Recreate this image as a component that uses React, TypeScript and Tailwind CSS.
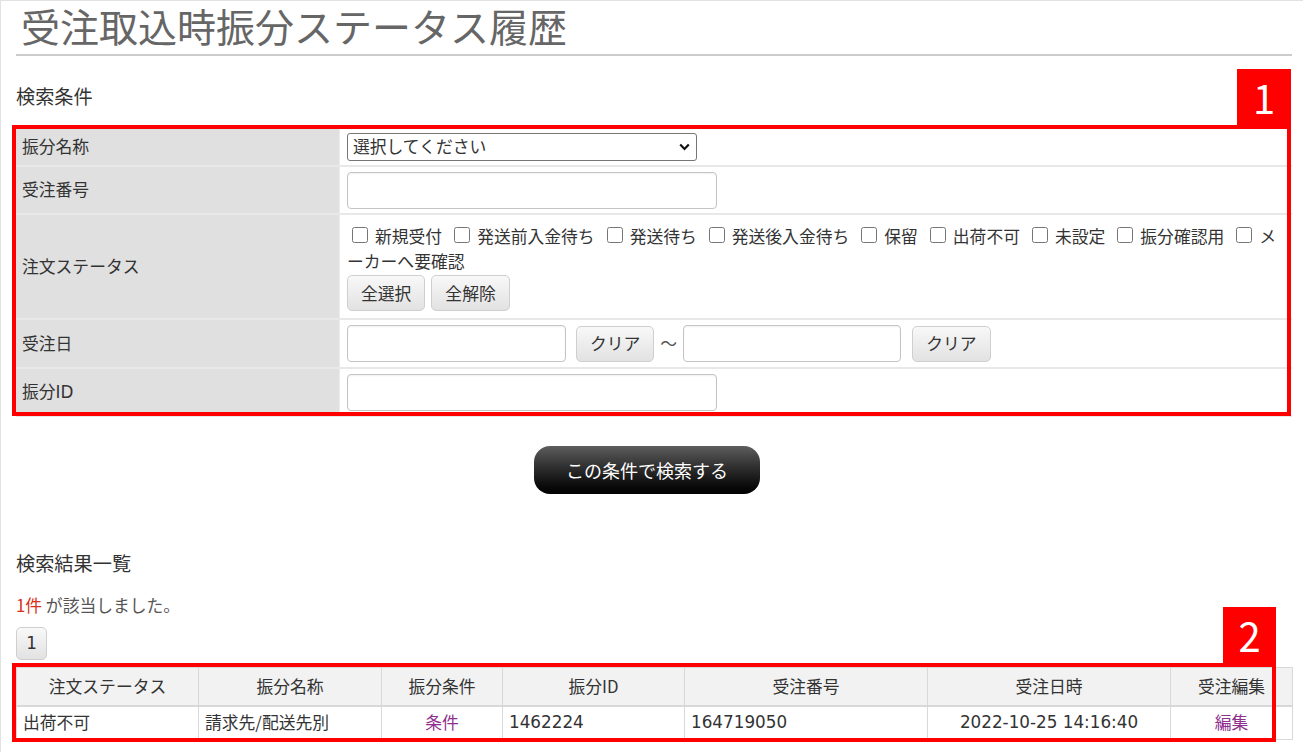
import type { ReactNode } from 'react';

const statuses = ['新規受付', '発送前入金待ち', '発送待ち', '発送後入金待ち', '保留', '出荷不可', '未設定', '振分確認用', 'メ'];

const columns = [
  { label: '注文ステータス', w: 'w-[182px]' },
  { label: '振分名称', w: 'w-[183px]' },
  { label: '振分条件', w: 'w-[121px]' },
  { label: '振分ID', w: 'w-[182px]' },
  { label: '受注番号', w: 'w-[243px]' },
  { label: '受注日時', w: 'w-[243px]' },
  { label: '受注編集', w: 'w-[122px]' },
];

// latin runs in the reference use a wide Verdana-like face
const latin = "font-['DejaVu_Sans','Noto_Sans_CJK_JP',sans-serif]";

function GrayButton({ children, className = '' }: { children: ReactNode; className?: string }) {
  return (
    <button
      type="button"
      className={`rounded-[5px] border border-[#cfcfcf] bg-linear-to-b from-[#f8f8f8] to-[#e2e2e2] text-[#333] leading-none ${className}`}
    >
      {children}
    </button>
  );
}

function Checkbox() {
  return <span className="inline-block h-[16px] w-[16px] shrink-0 rounded-[2.5px] border border-[#767676] bg-white" />;
}

function TextBox({ w }: { w: string }) {
  return <div className={`h-[37px] ${w} shrink-0 rounded-[4px] border border-[#c4c4c4] bg-white shadow-[inset_0_1px_2px_rgba(0,0,0,0.06)]`} />;
}

function Row({ label, h, children, top = false }: { label: ReactNode; h: string; children: ReactNode; top?: boolean }) {
  return (
    <div className={`flex ${h} border-b-2 border-[#e8e8e8]`}>
      <div className="flex w-[324px] shrink-0 items-center border-r border-[#ececec] bg-[#e0e0e0] pl-[6px] text-[#333]">
        {label}
      </div>
      <div className={`flex flex-1 pl-[7px] ${top ? 'flex-col pt-[9px]' : 'items-center'}`}>{children}</div>
    </div>
  );
}

export default function App() {
  return (
    <div className="h-[752px] w-[1303px] overflow-hidden border-l border-t border-[#e2e2e2] bg-white pl-[15px] pr-[11px] font-['Noto_Sans_CJK_JP','Noto_Sans',sans-serif] text-[16.8px] text-[#333]">
      {/* Title */}
      <div className="h-[55px] border-b-2 border-[#cccccc]">
        <h1 className="pl-[5px] text-[39px] leading-[48px] text-[#666]">受注取込時振分ステータス履歴</h1>
      </div>

      <h2 className="mt-[28px] text-[19.2px] leading-[24px]">検索条件</h2>

      {/* Search conditions */}
      <div className="relative mt-[21px]">
        <div className="pointer-events-none absolute -left-[4px] -top-[4px] bottom-[1px] right-[1px] z-10 border-4 border-[#ff0000]" />
        <div className="absolute -top-[60px] right-[1px] z-10 flex h-[56px] w-[54px] items-center justify-center bg-[#ff0000] text-[40px] leading-none text-white">
          1
        </div>

        <Row label="振分名称" h="h-[38px]">
          <div className="flex h-[28px] w-[350px] items-center justify-between rounded-[3px] border border-[#767676] bg-white pl-[5px] pr-[6px]">
            <span>選択してください</span>
            <svg width="11" height="8" viewBox="0 0 11 8" fill="none">
              <path d="M1.2 1.5 L5.5 6 L9.8 1.5" stroke="#111" strokeWidth="2.2" />
            </svg>
          </div>
        </Row>

        <Row label="受注番号" h="h-[48px]">
          <TextBox w="w-[370px]" />
        </Row>

        <Row label="注文ステータス" h="h-[105px]" top>
          <div className="flex h-[25px] items-center whitespace-nowrap">
            {statuses.map((s, i) => (
              <span key={s} className={`flex items-center ${i > 0 ? 'ml-[7px]' : ''}`}>
                <span className="ml-[5px]">
                  <Checkbox />
                </span>
                <span className="ml-[7px] leading-[25px]">{s}</span>
              </span>
            ))}
          </div>
          <div className="leading-[25px]">ーカーへ要確認</div>
          <div className="mt-[1px] flex gap-[6px]">
            <GrayButton className="h-[36px] px-[13px]">全選択</GrayButton>
            <GrayButton className="h-[36px] px-[13px]">全解除</GrayButton>
          </div>
        </Row>

        <Row label="受注日" h="h-[49px]">
          <TextBox w="w-[219px]" />
          <GrayButton className="ml-[10px] h-[36px] px-[13px]">クリア</GrayButton>
          <span className="ml-[6px] text-[#555]">～</span>
          <span className="ml-[6px]">
            <TextBox w="w-[218px]" />
          </span>
          <GrayButton className="ml-[11px] h-[36px] px-[13px]">クリア</GrayButton>
        </Row>

        <Row
          label={
            <span>
              振分<span className={latin}>ID</span>
            </span>
          }
          h="h-[48px]"
        >
          <TextBox w="w-[370px]" />
        </Row>
      </div>

      {/* Search button */}
      <div className="mt-[29px] flex justify-center pr-[14px]">
        <button
          type="button"
          className="h-[48px] w-[226px] rounded-[16px] bg-linear-to-b from-[#5e5e5e] to-[#020202] text-[18px] text-white"
        >
          この条件で検索する
        </button>
      </div>

      <h2 className="mt-[57px] text-[19.2px] leading-[24px]">検索結果一覧</h2>

      <p className="mt-[18px] leading-[24px] text-[#555]">
        <span className="text-[#d8301c]">1件</span> が該当しました。
      </p>

      <div className="mt-[10px]">
        <GrayButton className={`h-[33px] w-[31px] rounded-[4px] border-[#c2c2c2] from-[#e9e9e9] to-[#cdcdcd] ${latin}`}>1</GrayButton>
      </div>

      {/* Results */}
      <div className="relative mt-[7px]">
        <div className="pointer-events-none absolute -bottom-[2px] -left-[4px] -top-[4px] right-[16px] z-10 border-4 border-[#ff0000]" />
        <div className="absolute -top-[60px] right-[16px] z-10 flex h-[56px] w-[53px] items-center justify-center bg-[#ff0000] text-[40px] leading-none text-white">
          2
        </div>

        <table className="w-[1276px] table-fixed border-collapse">
          <thead>
            <tr className="h-[38px] bg-[#f1f2f1]">
              {columns.map((c) => (
                <th key={c.label} className={`${c.w} border border-b-2 border-[#d8d8d8] font-normal text-[#333]`}>
                  {c.label}
                </th>
              ))}
            </tr>
          </thead>
          <tbody>
            <tr className="h-[34px]">
              <td className="border border-[#d8d8d8] pl-[6px]">出荷不可</td>
              <td className="border border-[#d8d8d8] pl-[6px]">請求先/配送先別</td>
              <td className="border border-[#d8d8d8] text-center text-[#8e2f8e]">条件</td>
              <td className={`border border-[#d8d8d8] pl-[6px] ${latin}`}>1462224</td>
              <td className={`border border-[#d8d8d8] pl-[6px] ${latin}`}>164719050</td>
              <td className={`border border-[#d8d8d8] text-center ${latin}`}>2022-10-25 14:16:40</td>
              <td className="border border-[#d8d8d8] text-center text-[#8e2f8e]">編集</td>
            </tr>
          </tbody>
        </table>
      </div>
    </div>
  );
}
